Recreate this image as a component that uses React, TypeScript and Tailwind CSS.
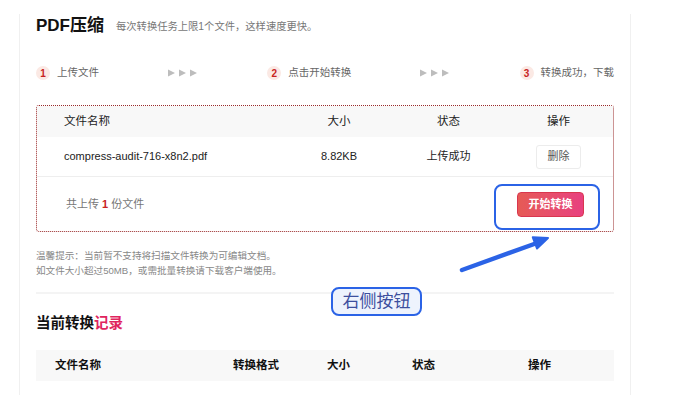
const steps = [
  { n: "1", label: "上传文件" },
  { n: "2", label: "点击开始转换" },
  { n: "3", label: "转换成功，下载" },
];

function Arrows() {
  return (
    <svg width="30" height="8" viewBox="0 0 30 8" aria-hidden="true">
      {[0, 11, 22].map((x) => (
        <polygon key={x} points={`${x},0.5 ${x + 7},4 ${x},7.5`} fill="#bdbdbd" />
      ))}
    </svg>
  );
}

function Step({ n, label }: { n: string; label: string }) {
  return (
    <div className="flex items-center gap-[7px]">
      <span className="flex h-[14px] w-[14px] items-center justify-center rounded-full bg-[#fbe9e4] text-[10px] font-bold text-[#c8231f]">
        {n}
      </span>
      <span className="text-[10.5px] text-[#666]">{label}</span>
    </div>
  );
}

export default function App() {
  return (
    <div className="relative h-[395px] w-full overflow-hidden bg-white font-['Liberation_Sans','Noto_Sans_CJK_SC',sans-serif]">
      <div className="ml-[19px] h-full w-[612px] border-x border-[#f0f0f0] px-[16px]">
        {/* title */}
        <div className="mt-[14px] flex h-[24px] items-center gap-[12px]">
          <h1 className="text-[17px] font-bold text-[#111]">PDF压缩</h1>
          <span className="pt-[2px] text-[10.3px] text-[#777]">每次转换任务上限1个文件，这样速度更快。</span>
        </div>

        {/* steps */}
        <div className="mt-[28px] flex h-[14px] items-center justify-between">
          <Step {...steps[0]} />
          <Arrows />
          <Step {...steps[1]} />
          <Arrows />
          <Step {...steps[2]} />
        </div>

        {/* upload box */}
        <div className="mt-[25px] rounded-[3px] border border-dotted border-[#9a2a2a]">
          <div className="grid h-[31px] grid-cols-[248px_108px_111px_1fr] items-center bg-[#f8f8f8] text-[11.5px] text-[#222]">
            <div className="pl-[27px]">文件名称</div>
            <div className="text-center">大小</div>
            <div className="text-center">状态</div>
            <div className="text-center">操作</div>
          </div>
          <div className="grid h-[40px] grid-cols-[248px_108px_111px_1fr] items-center border-b border-[#eeeeee] text-[11px] text-[#222]">
            <div className="pl-[27px]">compress-audit-716-x8n2.pdf</div>
            <div className="text-center">8.82KB</div>
            <div className="text-center">上传成功</div>
            <div className="flex justify-center">
              <button className="h-[24px] w-[45px] rounded-[3px] border border-[#ececec] bg-white text-[11px] text-[#555]">
                删除
              </button>
            </div>
          </div>
          <div className="flex h-[54px] items-center justify-between pl-[29px] pr-[29px]">
            <span className="text-[11px] text-[#777]">
              共上传 <b className="text-[#c8231f]">1</b> 份文件
            </span>
            <button className="h-[25px] w-[67px] rounded-[4px] border border-[#d9364f] bg-gradient-to-r from-[#e65a55] to-[#e8407f] text-[11px] font-bold text-white">
              开始转换
            </button>
          </div>
        </div>

        {/* tips */}
        <div className="mt-[17px] text-[9.6px] leading-[14.5px] text-[#888]">
          <p>温馨提示：当前暂不支持将扫描文件转换为可编辑文档。</p>
          <p>如文件大小超过50MB，或需批量转换请下载客户端使用。</p>
        </div>

        <div className="mt-[14px] h-[2px] bg-[#f4f4f4]" />

        {/* records */}
        <h2 className="mt-[19px] h-[20px] text-[14.5px] font-bold leading-[20px] text-[#111]">
          当前转换<span className="text-[#e0245e]">记录</span>
        </h2>

        <div className="mt-[17px] grid h-[31px] grid-cols-[197px_94px_85px_116px_1fr] items-center bg-[#f8f8f8] text-[11.5px] font-bold text-[#111]">
          <div className="pl-[19px]">文件名称</div>
          <div>转换格式</div>
          <div>大小</div>
          <div>状态</div>
          <div>操作</div>
        </div>
      </div>

      {/* annotation overlays */}
      <div className="absolute left-[494px] top-[184px] h-[46px] w-[106px] rounded-[8px] border-[2.5px] border-[#2b63e6]" />
      <svg className="absolute left-[455px] top-[230px]" width="100" height="46" viewBox="0 0 100 46" aria-hidden="true">
        <line x1="7" y1="40" x2="82" y2="13" stroke="#2b63e6" strokeWidth="4.5" strokeLinecap="round" />
        <polygon points="93,8 82,18.5 77.8,7.3" fill="#2b63e6" stroke="#2b63e6" strokeWidth="2" strokeLinejoin="round" />
      </svg>
      <div className="absolute left-[331px] top-[287px] flex h-[29px] w-[91px] items-center justify-center rounded-[8px] border-2 border-[#2b63e6] bg-[#eef3fd] text-[17px] text-[#3d4f9e]">
        右侧按钮
      </div>
    </div>
  );
}
